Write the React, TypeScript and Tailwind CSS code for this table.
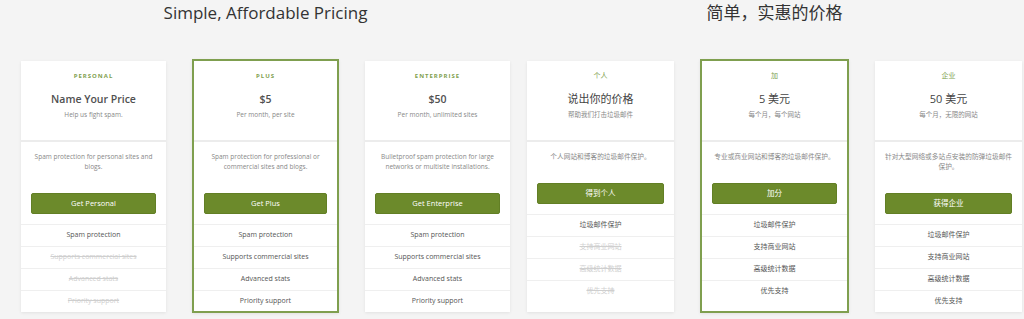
type Feature = { text: string; on: boolean };

type Plan = {
  label: string;
  title: string;
  sub: string;
  desc: string;
  button: string;
  features: Feature[];
  featured?: boolean;
  width: string;
};

const en: Plan[] = [
  {
    label: "PERSONAL",
    title: "Name Your Price",
    sub: "Help us fight spam.",
    desc: "Spam protection for personal sites and blogs.",
    button: "Get Personal",
    width: "w-[145px]",
    features: [
      { text: "Spam protection", on: true },
      { text: "Supports commercial sites", on: false },
      { text: "Advanced stats", on: false },
      { text: "Priority support", on: false },
    ],
  },
  {
    label: "PLUS",
    title: "$5",
    sub: "Per month, per site",
    desc: "Spam protection for professional or commercial sites and blogs.",
    button: "Get Plus",
    featured: true,
    width: "w-[147px]",
    features: [
      { text: "Spam protection", on: true },
      { text: "Supports commercial sites", on: true },
      { text: "Advanced stats", on: true },
      { text: "Priority support", on: true },
    ],
  },
  {
    label: "ENTERPRISE",
    title: "$50",
    sub: "Per month, unlimited sites",
    desc: "Bulletproof spam protection for large networks or multisite installations.",
    button: "Get Enterprise",
    width: "w-[145px]",
    features: [
      { text: "Spam protection", on: true },
      { text: "Supports commercial sites", on: true },
      { text: "Advanced stats", on: true },
      { text: "Priority support", on: true },
    ],
  },
];

const zh: Plan[] = [
  {
    label: "个人",
    title: "说出你的价格",
    sub: "帮助我们打击垃圾邮件",
    desc: "个人网站和博客的垃圾邮件保护。",
    button: "得到个人",
    width: "w-[147px]",
    features: [
      { text: "垃圾邮件保护", on: true },
      { text: "支持商业网站", on: false },
      { text: "高级统计数据", on: false },
      { text: "优先支持", on: false },
    ],
  },
  {
    label: "加",
    title: "5 美元",
    sub: "每个月，每个网站",
    desc: "专业或商业网站和博客的垃圾邮件保护。",
    button: "加分",
    featured: true,
    width: "w-[149px]",
    features: [
      { text: "垃圾邮件保护", on: true },
      { text: "支持商业网站", on: true },
      { text: "高级统计数据", on: true },
      { text: "优先支持", on: true },
    ],
  },
  {
    label: "企业",
    title: "50 美元",
    sub: "每个月，无限的网站",
    desc: "针对大型网络或多站点安装的防弹垃圾邮件保护。",
    button: "获得企业",
    width: "w-[147px]",
    features: [
      { text: "垃圾邮件保护", on: true },
      { text: "支持商业网站", on: true },
      { text: "高级统计数据", on: true },
      { text: "优先支持", on: true },
    ],
  },
];

function Card({ plan, cjk }: { plan: Plan; cjk: boolean }) {
  return (
    <div
      className={`${plan.width} shrink-0 flex flex-col bg-white shadow-[0_1px_3px_rgba(0,0,0,0.08)] ${
        plan.featured ? "h-[254px] border-2 border-[#7f9f4f]" : "mt-[2px] h-[251px]"
      }`}
    >
      {/* header */}
      <div className="h-[81px] shrink-0 border-b-2 border-[#ececec] flex flex-col items-center pt-[10px]">
        <div
          className={
            cjk
              ? "text-[7px] leading-[10px] text-[#7f9f4f]"
              : "text-[6px] leading-[10px] font-bold tracking-[1px] text-[#7f9f4f]"
          }
        >
          {plan.label}
        </div>
        <div
          className={`mt-[10px] leading-[16px] ${
            cjk ? "text-[11px] font-normal text-[#444]" : "text-[10.5px] font-semibold text-[#505050]"
          }`}
        >
          {plan.title}
        </div>
        <div className="mt-[3px] text-[6.5px] leading-[10px] text-[#888]">{plan.sub}</div>
      </div>

      {/* body */}
      <div
        className={`pt-[10px] text-center leading-[10px] text-[#888] ${
          cjk ? "px-[9px] text-[6.7px]" : "px-[11px] text-[6.5px]"
        }`}
      >
        {plan.desc}
      </div>
      <div className="mx-[10px] mt-[21px] mb-[10px] h-[21px] shrink-0 rounded-[2px] bg-[#6c8a2b] border border-[#627f25] flex items-center justify-center text-[7.5px] text-white">
        {plan.button}
      </div>

      {/* features */}
      {plan.features.map((f) => (
        <div
          key={f.text}
          className={`h-[22px] shrink-0 border-t border-[#efefef] flex items-center justify-center text-[7px] ${
            f.on ? "text-[#555]" : "text-[#cfcfcf] line-through"
          }`}
        >
          {f.text}
        </div>
      ))}
    </div>
  );
}

function Panel({
  heading,
  plans,
  cjk,
  pad,
}: {
  heading: string;
  plans: Plan[];
  cjk: boolean;
  pad: string;
}) {
  return (
    <div className={`w-[512px] shrink-0 ${pad}`}>
      <div className="w-fit flex flex-col">
        <div className="pt-[3px] h-[59px] text-center text-[17px] leading-[20px] text-[#333]">{heading}</div>
        <div className="flex items-start gap-[26px]">
          {plans.map((p) => (
            <Card key={p.label} plan={p} cjk={cjk} />
          ))}
        </div>
      </div>
    </div>
  );
}

export default function App() {
  return (
    <div
      className="w-[1024px] h-[319px] bg-[#f4f4f4] flex overflow-hidden"
      style={{ fontFamily: '"Open Sans", "Noto Sans CJK SC", sans-serif' }}
    >
      <Panel heading="Simple, Affordable Pricing" plans={en} cjk={false} pad="pl-[21px]" />
      <Panel heading="简单，实惠的价格" plans={zh} cjk pad="pl-[15px]" />
    </div>
  );
}
